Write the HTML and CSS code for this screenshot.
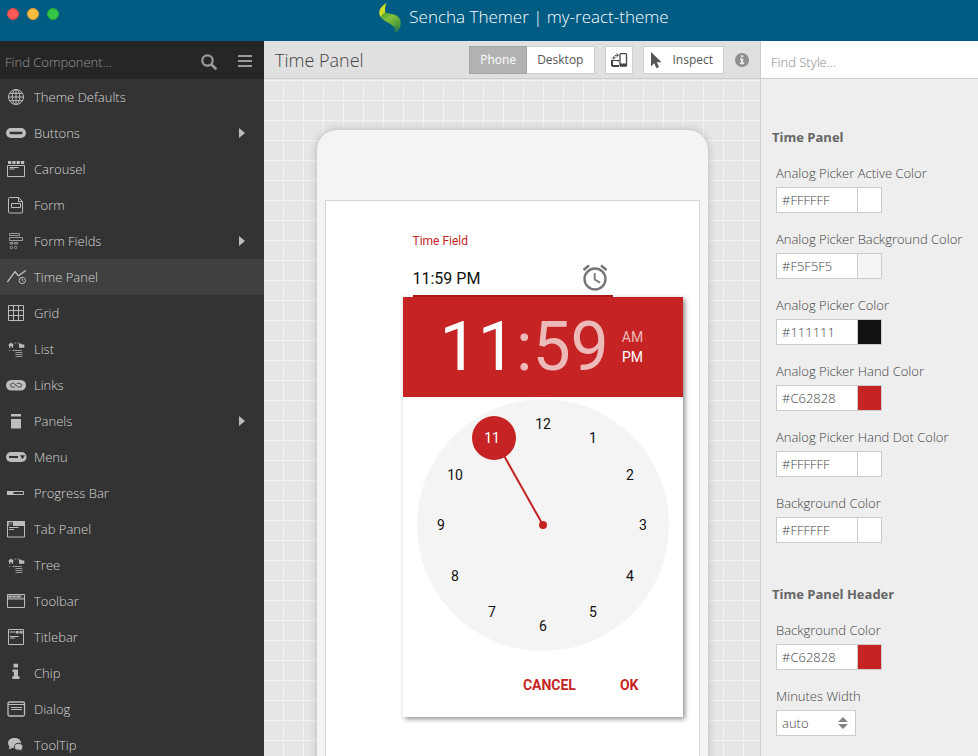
FILE: index.html
```html
<!DOCTYPE html>
<html lang="en">
<head>
<meta charset="utf-8">
<title>Sencha Themer</title>
<link rel="stylesheet" href="styles.css">
</head>
<body>
<header class="titlebar">
  <div class="lights"><span class="light red"></span><span class="light amber"></span><span class="light green"></span></div>
  <div class="brand">
    <svg class="logo" viewBox="0 0 22 31" aria-hidden="true">
      <defs>
        <linearGradient id="leaf" x1="0" y1="0" x2="1" y2="1"><stop offset="0" stop-color="#4d9b30"/><stop offset=".45" stop-color="#80c03c"/><stop offset="1" stop-color="#3f8f38"/></linearGradient>
        <linearGradient id="tail" x1="1" y1="0" x2="0" y2="1"><stop offset="0" stop-color="#5ba637"/><stop offset="1" stop-color="#1c6a55"/></linearGradient>
      </defs>
      <path d="M5.500 9.200C10 11 16 10.500 19.500 14c2 2.200 2.700 5 1.500 7.500-1.500 2-5 2.700-7.500 1.500C11 19.500 4.500 18.500 1.800 14 1 12 2.500 9.500 5.500 9.200z" fill="url(#leaf)"/>
      <path d="M21.500 19c.6 5-2 9-6 11 1-2.500.3-5-2-7 3.500 1 6.500-.5 8-4z" fill="url(#tail)"/>
      <path d="M7.700 0C4 2 .2 5 .3 10c0 1.800.5 3 1.500 4 .8-2 2.200-3.500 4.400-4.400C6 7 5.600 3.500 7.700 0z" fill="#cfdc28"/>
    </svg>
    <span>Sencha Themer | my-react-theme</span>
  </div>
</header>

<div class="workspace">
  <aside class="sidebar">
    <div class="side-search">
      <input type="text" placeholder="Find Component..." aria-label="Find Component">
      <button type="button" aria-label="Search"><svg class="icon-16" viewBox="0 0 16 16"><circle cx="6.500" cy="6.500" r="5.200" fill="none" stroke="currentColor" stroke-width="2.200"/><path d="M10.500 10.500l4 4" stroke="currentColor" stroke-width="2.600" stroke-linecap="round"/></svg></button>
      <button type="button" aria-label="Menu"><svg class="icon-14" viewBox="0 0 14 14"><path d="M0 1h14M0 6h14M0 11h14" stroke="currentColor" stroke-width="2"/></svg></button>
    </div>
    <nav class="components">
      <a href="#"><svg viewBox="0 0 20 20"><g class="line"><circle cx="10" cy="10" r="7.500"/><ellipse cx="10" cy="10" rx="3.800" ry="7.500"/><path d="M10 2.500v15M2.500 10h15M3.500 6.300h13M3.500 13.700h13"/></g></svg>Theme Defaults</a>
      <a href="#"><svg viewBox="0 0 20 20"><rect y="5" width="20" height="10" rx="5"/><rect class="cut" x="3.500" y="8.700" width="13" height="2.600" rx="1"/></svg>Buttons<i class="caret"></i></a>
      <a href="#"><svg viewBox="0 0 20 20"><path d="M2 2h3.300v3H2zM6.300 2h3.300v3H6.300zM10.600 2h3.300v3h-3.300zM14.900 2h3.300v3h-3.300z"/><path class="line" d="M1.500 6.500h17v11h-17zM3.500 8.500h9M3.500 10h5"/></svg>Carousel</a>
      <a href="#"><svg viewBox="0 0 20 20"><g class="line"><path d="M3.500 2.500h9l4 4v10.500a1 1 0 0 1-1 1h-12a1 1 0 0 1-1-1v-13.500a1 1 0 0 1 1-1zM12.500 2.500v4h4" /><path d="M5.500 8.500h9v4h-9z"/></g></svg>Form</a>
      <a href="#"><svg viewBox="0 0 20 20"><g class="line dim"><path d="M3.500 2.500h10v2h-10zM3.500 6.500h13v3h-13zM4 11.500h3v1.500h-3zM8.500 11.500h3v1.500h-3z"/><circle cx="5.300" cy="16.500" r="1.200"/><circle cx="9.600" cy="16.500" r="1.200"/></g></svg>Form Fields<i class="caret"></i></a>
      <a href="#" class="selected" aria-current="page"><svg viewBox="0 0 20 20"><path d="M1.300 15.200L9 4.700l3.500 4.200 7.200-5.400" fill="none" stroke="currentColor" stroke-width="1.400"/><g class="line"><circle cx="16.300" cy="13.500" r="3.200"/><path d="M16.200 11.500v2l1.300 1.200"/></g></svg>Time Panel</a>
      <a href="#"><svg viewBox="0 0 20 20"><path class="line" d="M2.500 2.500h15v15h-15zM7.500 2.500v15M12.500 2.500v15M2.500 7.500h15M2.500 12.500h15"/></svg>Grid</a>
      <a href="#"><svg viewBox="0 0 20 20"><path d="M5 3.500l3 2.700H7v2.600H5.700V7H4.300v1.800H3V6.200H2zM13 4.500h2l.700 1H18.300v3.300H13z"/><path class="line dim" d="M8.500 4.500l1.500-1M11 3.500l1.500 1M3 11.500h1M6.500 11.500h9.500M9.500 13.500h7M9.500 15.500h7M9.500 17.500h7"/></svg>List</a>
      <a href="#"><svg viewBox="0 0 20 20"><rect y="5" width="20" height="10.500" rx="5.200"/><path class="cut-line" d="M9 11.800c-1 .8-4.500.7-4.500-1.500s3-2.300 4-1.500l2 2M11 8.700c1-.8 4.500-.7 4.500 1.500s-3 2.300-4 1.500l-2-2"/></svg>Links</a>
      <a href="#"><svg viewBox="0 0 20 20"><path d="M5 3h10v2.500H5zM5 8h10v9.500H5z"/></svg>Panels<i class="caret"></i></a>
      <a href="#"><svg viewBox="0 0 20 20"><rect y="5" width="20.500" height="10" rx="5"/><path class="cut" d="M3 9h9v2H3zM14 8.200h5l-2.500 4z"/></svg>Menu</a>
      <a href="#"><svg viewBox="0 0 20 20"><path class="line" d="M1.500 8.500h16v3h-16z"/><path d="M1 8h6.500v4H1z"/></svg>Progress Bar</a>
      <a href="#"><svg viewBox="0 0 20 20"><path class="line" d="M1.500 2.500h17v15.500h-17zM3 8.500h9.500M3 10.500h5"/><path fill-rule="evenodd" d="M1 2h18v5H7V3.300H2.700V7H1z"/><path d="M3 3.700h3.300v2.500H3z" class="faint"/></svg>Tab Panel</a>
      <a href="#"><svg viewBox="0 0 20 20"><path d="M5 3.500l3 2.700H7v2.600H5.700V7H4.300v1.800H3V6.200H2zM13 4.500h2l.700 1H18.300v3.300H13z"/><path class="line dim" d="M8.500 4.500l1.500-1M11 3.500l1.500 1M3 11.500h1M6.500 11.500h9.500M9.500 13.500h7M9.500 15.500h7M9.500 17.500h7"/></svg>Tree</a>
      <a href="#"><svg viewBox="0 0 20 20"><path class="line" d="M1.500 3.500h17v13h-17zM1.500 8h17"/><path class="faint" d="M2 4h17v4H2z"/><path d="M2.500 4.700h3.200v1.800H2.500zM6.500 4.700h3.200v1.800H6.500zM10.500 4.700h4v1.800h-4z"/><path class="cut" d="M16 4.500h1.800v2H16z"/></svg>Toolbar</a>
      <a href="#"><svg viewBox="0 0 20 20"><path class="line" d="M2.500 2.500h15v15h-15zM3.500 5h5.500M4 9.500h8.500M4 11h5"/><path d="M9.700 4h3v2.500h-3zM13.500 4h3v2.500h-3z"/></svg>Titlebar</a>
      <a href="#"><svg viewBox="0 0 20 20"><path d="M7.500.800h4.500v3.700H7.500zM6.500 6.500h5.500v6.700h1.500v2.800H6.300v-2.800h1.500V9H6.500z"/></svg>Chip</a>
      <a href="#"><svg viewBox="0 0 20 20"><rect x="2" y="3" width="16.500" height="14" rx="1.500" fill="none" stroke="currentColor" stroke-width="1.300"/><path class="line" d="M2 5.500h16.500M5 8.500h11M5 10.500h11"/></svg>Dialog</a>
      <a href="#"><svg viewBox="0 0 20 20"><path d="M8.500 3c3.700 0 6.500 2 6.500 4.900s-2.800 5-6.500 5q-1 0-2-.2-1.500 1.200-4 1.500.8-1 1-2.500Q2 10.200 2 7.900C2 5 4.800 3 8.500 3z"/><path stroke="#333" d="M12.500 8.300c2.500 0 4.500 1.500 4.500 3.600 0 1-.6 2-1.300 2.500q.2 1.300 1 2-2-.3-3-1.200c-3 .4-5.500-1-5.500-3.300 0-2.100 1.800-3.600 4.300-3.600z"/></svg>ToolTip</a>
    </nav>
  </aside>

  <main class="center">
    <div class="toolbar">
      <h1>Time Panel</h1>
      <div class="segmented">
        <button type="button" class="btn active">Phone</button><button type="button" class="btn last">Desktop</button>
      </div>
      <button type="button" class="btn square" aria-label="Rotate device"><svg class="icon-18" viewBox="0 0 18 18"><rect x="10" y="2.700" width="6.500" height="12.500" rx="1" fill="none" stroke="currentColor" stroke-width="1.300"/><path d="M10 12.500h6.500v2.700H10zM1 9h2v6H1zM1.500 14h7.500v2H2zM7.500 9H9v1.500H7.500z" fill="currentColor"/><path d="M2.500 9.500H9M3.500 7.500C3.500 5 5 4.200 8 4.200M2 6.500L3.500 8l2-1.500M6.500 2.500l2 1.700-2 1.800" fill="none" stroke="currentColor"/></svg></button>
      <button type="button" class="btn inspect"><svg class="pointer" viewBox="0 0 12 18"><path d="M1 1v14.500l3.300-3.300 2 5 2.700-1.200-2.200-4.800h4.700z" fill="currentColor"/></svg>Inspect</button>
      <button type="button" class="info" aria-label="Information"><svg class="icon-14" viewBox="0 0 14 14"><circle cx="7" cy="7" r="7" fill="#8e8e8e"/><path d="M5.800 2.300h2.400v2H5.800zM5 5.500h3.200v4h1v1.700H4.900V9.500h1V7H5z" fill="#e9e9e9"/></svg></button>
    </div>
    <div class="stage">
      <div class="phone">
        <div class="screen">
          <div class="time-field">
            <label for="time">Time Field</label>
            <div class="time-row">
              <input id="time" type="text" value="11:59 PM">
              <svg class="alarm" viewBox="0 0 26 28"><g fill="none" stroke="#757575"><circle cx="13" cy="15" r="10.500" stroke-width="2.400"/><path d="M1.500 6L7 1.500M24.500 6L19 1.500" stroke-width="2.400"/><path d="M12.700 9v6.600l5.300 3.200" stroke-width="1.800"/></g></svg>
            </div>
            <section class="picker" aria-label="Time picker">
              <div class="picker-head">
                <div class="digits"><span class="on">11</span>:59</div>
                <div class="meridiem"><button type="button">AM</button><button type="button" class="on">PM</button></div>
              </div>
              <svg class="face" viewBox="0 0 252 252" role="img" aria-label="Clock face">
                <circle cx="126" cy="126" r="126" fill="#f4f4f4"/>
                <path d="M126 126L77 39" stroke="#c62424" stroke-width="2"/>
                <circle cx="126" cy="126" r="4" fill="#c62424"/>
                <circle cx="77" cy="39" r="22" fill="#c62424"/>
                <g class="hours">
                  <text x="126" y="30">12</text><text x="176" y="44">1</text><text x="213" y="81">2</text><text x="226" y="131">3</text>
                  <text x="213" y="182">4</text><text x="176" y="218">5</text><text x="126" y="232">6</text><text x="75" y="218">7</text>
                  <text x="38" y="182">8</text><text x="24" y="131">9</text><text x="38" y="81">10</text><text x="75" y="44" class="picked">11</text>
                </g>
              </svg>
              <div class="actions"><button type="button">CANCEL</button><button type="button">OK</button></div>
            </section>
          </div>
        </div>
      </div>
    </div>
  </main>

  <aside class="styles">
    <input class="style-search" type="text" placeholder="Find Style..." aria-label="Find Style">
    <div class="groups">
      <section>
        <h2>Time Panel</h2>
        <div class="field"><label for="c1">Analog Picker Active Color</label><div class="color"><input id="c1" type="text" value="#FFFFFF"><span class="swatch white"></span></div></div>
        <div class="field"><label for="c2">Analog Picker Background Color</label><div class="color"><input id="c2" type="text" value="#F5F5F5"><span class="swatch smoke"></span></div></div>
        <div class="field"><label for="c3">Analog Picker Color</label><div class="color"><input id="c3" type="text" value="#111111"><span class="swatch black"></span></div></div>
        <div class="field"><label for="c4">Analog Picker Hand Color</label><div class="color"><input id="c4" type="text" value="#C62828"><span class="swatch crimson"></span></div></div>
        <div class="field"><label for="c5">Analog Picker Hand Dot Color</label><div class="color"><input id="c5" type="text" value="#FFFFFF"><span class="swatch white"></span></div></div>
        <div class="field"><label for="c6">Background Color</label><div class="color"><input id="c6" type="text" value="#FFFFFF"><span class="swatch white"></span></div></div>
      </section>
      <section>
        <h2>Time Panel Header</h2>
        <div class="field"><label for="c7">Background Color</label><div class="color"><input id="c7" type="text" value="#C62828"><span class="swatch crimson"></span></div></div>
        <div class="field"><label for="mw">Minutes Width</label><div class="select"><select id="mw"><option>auto</option></select><svg viewBox="0 0 10 14"><path d="M5 1l5 5H0zM5 13l5-5H0z" fill="#858585"/></svg></div></div>
      </section>
    </div>
  </aside>
</div>
</body>
</html>
```

FILE: styles.css
```css
* { box-sizing: border-box; }
body {
  margin: 0;
  height: 100vh;
  overflow: hidden;
  display: flex;
  flex-direction: column;
  font-family: "Open Sans", "Liberation Sans", sans-serif;
  font-size: 13px;
  line-height: 20px;
  font-weight: 300;
  color: #444;
}
button, input, select { font: inherit; color: inherit; margin: 0; padding: 0; border: 0; border-radius: 0; background: none; }
h1, h2 { margin: 0; }
svg { display: block; flex: none; }
.icon-14 { width: 14px; height: 14px; }
.icon-16 { width: 16px; height: 16px; }
.icon-18 { width: 18px; height: 18px; }

.titlebar { flex: none; height: 41px; display: flex; background: #005c83; color: #fff; }
.lights { display: flex; gap: 8px; padding: 8px 11px 0 7px; }
.light { width: 12px; height: 12px; border-radius: 50%; border: 1px solid; }
.red { background: #fc5b57; border-color: #df4744; }
.amber { background: #fdbc40; border-color: #de9f34; }
.green { background: #34c84a; border-color: #27aa35; }
.brand { flex: 1; display: flex; justify-content: center; gap: 8px; padding-top: 3px; font-size: 17px; line-height: 28px; }
.logo { width: 22px; height: 31px; }

.workspace { flex: 1; min-height: 0; display: grid; grid-template-columns: 264px 1fr 218px; }

.sidebar { background: #333; color: #bdbdbd; overflow: hidden; }
.side-search { height: 38px; display: flex; align-items: center; gap: 21px; padding: 4px 12px 0 5px; background: #262626; color: #9b9b9b; }
.side-search input { flex: 1; min-width: 0; height: 30px; }
.side-search input::placeholder { color: #999; opacity: 1; }
.components a { display: flex; align-items: center; gap: 8px; height: 36px; padding: 0 19px 0 6px; color: #d6d6d6; text-decoration: none; }
.components .selected { background: #404040; }
.components svg { width: 20px; height: 20px; color: #bdbdbd; fill: #bdbdbd; overflow: visible; }
.components .line { fill: none; stroke: #bdbdbd; stroke-width: 1; }
.components .dim { opacity: .75; }
.components .faint { opacity: .3; }
.components .cut { fill: #333; }
.components .cut-line { fill: none; stroke: #444; stroke-width: 1; }
.caret { margin-left: auto; border: 5px solid transparent; border-left: 6px solid #bdbdbd; border-right: 0; }

.center { min-width: 0; display: flex; flex-direction: column; overflow: hidden; }
.toolbar { flex: none; height: 38px; display: flex; align-items: center; gap: 10px; padding: 0 11px; background: #e0e0e0; border-bottom: 1px solid #ccc; }
.toolbar h1 { flex: 1; font-size: 18px; line-height: 24px; font-weight: 300; }
.segmented { display: flex; }
.btn { height: 28px; padding: 0 10px; border: 1px solid #d0d0d0; background: #fff; color: #555; font-size: 12px; font-weight: 400; }
.btn.active { background: #b2b2b2; border-color: #a5a5a5; color: #fff; }
.btn.last { border-left: 0; padding-right: 11px; }
.btn.square { width: 28px; padding: 0; display: grid; place-items: center; color: #444; }
.inspect { display: flex; align-items: center; gap: 10px; padding: 0 10px 0 6px; }
.pointer { width: 12px; height: 18px; }
.info { margin-left: 1px; }

.stage {
  flex: 1; min-height: 0; overflow: hidden; padding-top: 51px;
  background: linear-gradient(to right, transparent 19px, #f3f3f3 19px) 0 0 / 20px 20px,
    linear-gradient(to bottom, transparent 19px, #f3f3f3 19px) 0 2px / 20px 20px, #e6e6e6;
}
.phone { width: 391px; height: 800px; margin: 0 auto; padding: 70px 8px; border-radius: 20px; background: #f4f4f4; box-shadow: 0 0 0 1px #cfcfcf, 0 0 8px rgba(0, 0, 0, .2); }
.screen { height: 660px; padding: 28px 86px 0 87px; border: 1px solid #d5d5d5; background: #fff; font-family: Roboto, "Liberation Sans", sans-serif; font-weight: 400; }
.time-field { position: relative; }
.time-field label { display: block; height: 24px; line-height: 24px; font-size: 12px; color: #c62424; }
.time-row { display: flex; align-items: center; height: 44px; padding: 8px 5px 0 0; border-bottom: 2px solid #b71c1c; }
.time-row input { flex: 1; min-width: 0; height: 24px; font-size: 16px; color: #111; }
.alarm { width: 26px; height: 28px; }

.picker { position: absolute; top: 100%; left: -10px; width: 280px; background: #fff; box-shadow: 2px 2px 5px rgba(0, 0, 0, .45); }
.picker-head { height: 100px; display: flex; align-items: center; justify-content: flex-start; gap: 13px; padding-left: 37px; background: #c62424; color: #edbaba; }
.digits { font-size: 68px; line-height: 80px; }
.on { color: #fff; }
.meridiem { display: flex; flex-direction: column; font-size: 14px; line-height: 20px; }
.face { width: 252px; height: 252px; margin: 2px auto 0; }
.hours { font-size: 14px; text-anchor: middle; fill: #111; }
.hours .picked { fill: #fff; }
.actions { display: flex; justify-content: flex-end; gap: 44px; height: 66px; padding: 2px 44px 0 0; font-size: 14px; }
.actions button { font-weight: 700; color: #c62424; }

.styles { background: #eee; border-left: 1px solid #ccc; overflow: hidden; }
.style-search { display: block; width: 100%; height: 38px; padding: 4px 10px 0; background: #fff; border-bottom: 1px solid #ccc; }
.style-search::placeholder { color: #888; opacity: 1; }
.groups { display: flex; flex-direction: column; gap: 41px; padding: 48px 11px; }
.groups section { display: flex; flex-direction: column; gap: 16px; }
.groups h2 { font-size: 13px; line-height: 20px; font-weight: 700; color: #666; }
.field { display: flex; flex-direction: column; align-items: flex-start; gap: 4px; padding-left: 4px; white-space: nowrap; }
.color { display: flex; width: 106px; height: 26px; border: 1px solid #ccc; background: #fff; }
.color input { flex: 1; min-width: 0; padding: 0 5px; }
.swatch { width: 24px; border-left: 1px solid #ccc; }
.white { background: #fff; }
.smoke { background: #f5f5f5; }
.black { background: #111; }
.crimson { background: #c62424; }
.select { position: relative; width: 80px; height: 26px; }
.select select { width: 100%; height: 100%; padding: 0 5px; border: 1px solid #ccc; background: #fff; appearance: none; }
.select svg { position: absolute; right: 8px; top: 6px; width: 10px; height: 14px; pointer-events: none; }
```
